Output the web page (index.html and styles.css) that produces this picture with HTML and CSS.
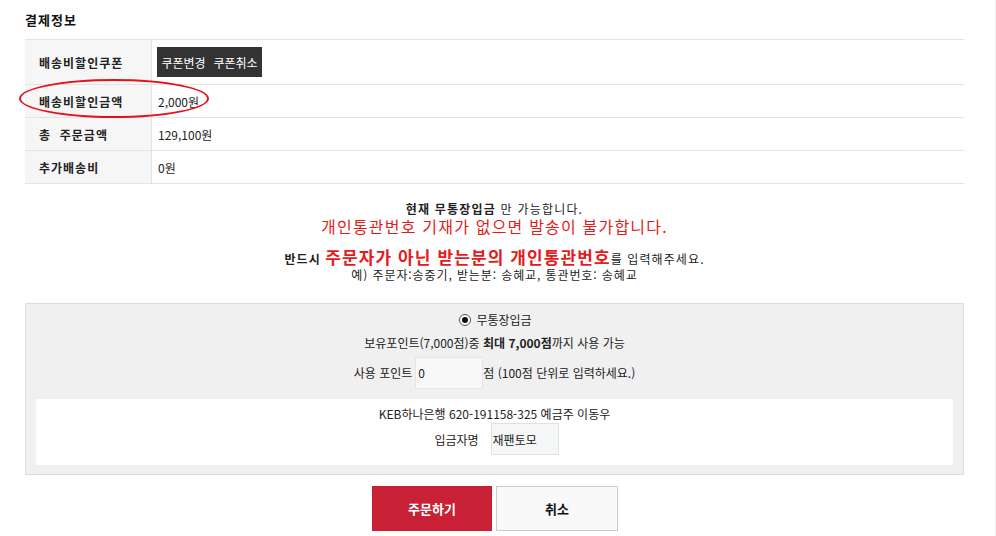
FILE: index.html
```html
<!DOCTYPE html>
<html lang="ko">
<head>
<meta charset="utf-8">
<link rel="stylesheet" href="styles.css">
</head>
<body>
<div class="page">
  <h2 class="title">결제정보</h2>
  <div class="pay-table">
    <div class="row row-tall">
      <div class="label">배송비할인쿠폰</div>
      <div class="value"><span class="coupon-btn">쿠폰변경</span><span class="coupon-btn">쿠폰취소</span></div>
    </div>
    <div class="row">
      <div class="label">배송비할인금액</div>
      <div class="value">2,000원</div>
    </div>
    <div class="row">
      <div class="label">총&nbsp;&nbsp;주문금액</div>
      <div class="value">129,100원</div>
    </div>
    <div class="row">
      <div class="label">추가배송비</div>
      <div class="value">0원</div>
    </div>
    <div class="highlight"></div>
  </div>

  <div class="notice">
    <p class="n1"><b>현재 무통장입금</b> 만 가능합니다.</p>
    <p class="n2">개인통관번호 기재가 없으면 발송이 불가합니다.</p>
    <p class="n3"><b>반드시 </b><b class="red">주문자가 아닌 받는분의 개인통관번호</b>를 입력해주세요.</p>
    <p class="n4">예) 주문자:송중기, 받는분: 송혜교, 통관번호: 송혜교</p>
  </div>

  <div class="paybox">
    <div class="method"><span class="radio"><span class="dot"></span></span>무통장입금</div>
    <div class="points">보유포인트(7,000점)중 <b>최대 7,000점</b>까지 사용 가능</div>
    <div class="use-point">사용 포인트 <span class="field field-point">0</span>점 (100점 단위로 입력하세요.)</div>
    <div class="bank">
      <div class="bank-line">KEB하나은행 620-191158-325 예금주 이동우</div>
      <div class="depositor"><span class="dep-label">입금자명</span><span class="field field-name">재팬토모</span></div>
    </div>
  </div>

  <div class="actions">
    <span class="btn btn-order">주문하기</span>
    <span class="btn btn-cancel">취소</span>
  </div>
</div>
</body>
</html>
```
FILE: styles.css
```css
* { box-sizing: border-box; }
html, body { margin: 0; padding: 0; background: #fff; }
body {
  font-family: "Noto Sans CJK KR", "Noto Sans", sans-serif;
  font-size: 12px;
  color: #222;
}
.page {
  width: 996px;
  height: 536px;
  padding: 0 31px 0 25px;
  border-right: 1px solid #ececec;
}
.title {
  margin: 0;
  padding: 11px 0 10px;
  font-size: 13px;
  line-height: 18px;
  font-weight: bold;
  color: #111;
  letter-spacing: 1px;
}
.pay-table {
  position: relative;
  border-bottom: 1px solid #e3e3e3;
}
.row {
  display: flex;
  height: 33px;
  border-top: 1px solid #e3e3e3;
}
.row-tall { height: 45px; }
.label {
  width: 127px;
  flex: none;
  background: #f6f6f6;
  border-right: 1px solid #e3e3e3;
  padding-left: 14px;
  font-weight: bold;
  letter-spacing: 1px;
  color: #222;
  display: flex;
  align-items: center;
}
.value {
  flex: 1;
  padding-left: 6px;
  display: flex;
  align-items: center;
  color: #222;
}
.coupon-btn {
  display: inline-flex;
  align-items: center;
  justify-content: center;
  width: 53px;
  height: 30px;
  background: #333;
  color: #fff;
  margin-left: -1px;
}
.highlight {
  position: absolute;
  left: -6px;
  top: 40px;
  width: 190px;
  height: 39px;
  border: 2px solid #e5101c;
  border-radius: 50%;
}
.notice {
  text-align: center;
  padding-top: 17px;
}
.notice p { margin: 0; }
.n1 { line-height: 16px; letter-spacing: 1.2px; }
.n1 b { font-weight: bold; }
.n2 { font-size: 16px; line-height: 18px; color: #e51b1b; letter-spacing: 1.2px; }
.n3 { margin-top: 13px !important; line-height: 18px; letter-spacing: 1.1px; }
.n3 .red { color: #e51b1b; font-size: 17px; }
.n4 { line-height: 13px; letter-spacing: 0.9px; }
.paybox {
  margin-top: 22px;
  background: #f0f0f0;
  border: 1px solid #dcdcdc;
  padding: 8px 10px 9px;
  text-align: center;
}
.method {
  line-height: 16px;
  display: flex;
  justify-content: center;
  align-items: center;
  padding-left: 2px;
}
.radio {
  width: 12px;
  height: 12px;
  border: 1px solid #555;
  border-radius: 50%;
  background: #fff;
  display: inline-flex;
  align-items: center;
  justify-content: center;
  margin-right: 5px;
}
.dot { width: 6px; height: 6px; border-radius: 50%; background: #111; }
.points { margin-top: 7px; line-height: 16px; }
.use-point {
  margin-top: 6px;
  display: flex;
  justify-content: center;
  align-items: center;
  line-height: 16px;
}
.field {
  display: inline-flex;
  align-items: center;
  height: 32px;
  width: 68px;
  text-align: left;
  padding-left: 2px;
}
.field-point {
  background: #f8f8f8;
  border: 1px solid #e6e6e6;
  margin-left: 3px;
}
.bank {
  margin-top: 10px;
  background: #fff;
  padding: 7px 0 10px;
}
.bank-line { line-height: 16px; }
.depositor {
  margin-top: 1px;
  display: flex;
  justify-content: center;
  align-items: center;
  padding-left: 4px;
}
.dep-label { margin-right: 12px; }
.field-name {
  height: 32px;
  background: #f5f6f6;
  border: 1px solid #dde3e3;
  padding-left: 1px;
}
.actions {
  margin-top: 11px;
  display: flex;
  justify-content: center;
  gap: 4px;
  padding-left: 1px;
}
.btn {
  display: inline-flex;
  align-items: center;
  justify-content: center;
  height: 45px;
  font-weight: bold;
  font-size: 13px;
}
.btn-order { width: 120px; background: #c82034; color: #fff; }
.btn-cancel { width: 122px; background: #f9f9f9; border: 1px solid #cccccc; color: #111; }
```
